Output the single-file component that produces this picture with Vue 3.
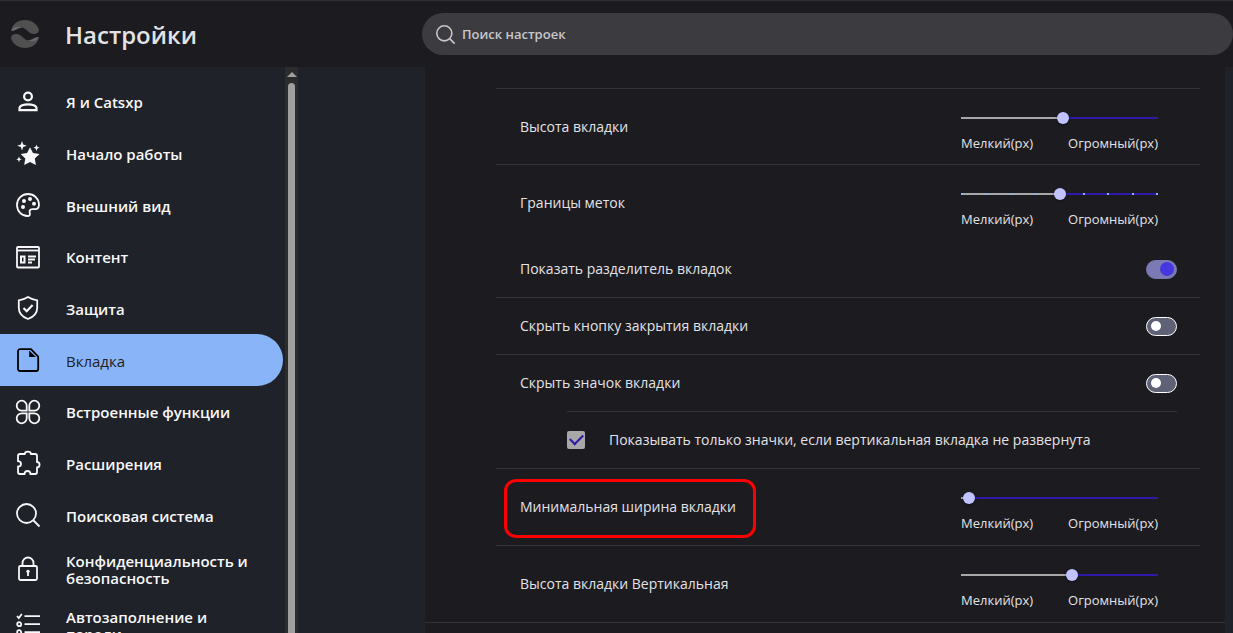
<script setup>
import { ref } from 'vue'

const query = ref('')

const items = ref([
  { icon: 'person', label: 'Я и Catsxp' },
  { icon: 'stars', label: 'Начало работы' },
  { icon: 'palette', label: 'Внешний вид' },
  { icon: 'content', label: 'Контент' },
  { icon: 'shield', label: 'Защита' },
  { icon: 'tab', label: 'Вкладка', active: true },
  { icon: 'clover', label: 'Встроенные функции' },
  { icon: 'puzzle', label: 'Расширения' },
  { icon: 'search', label: 'Поисковая система' }
])

const tallItems = ref([
  { icon: 'lock', label: 'Конфиденциальность и безопасность' },
  { icon: 'list', label: 'Автозаполнение и пароли' }
])

const rows = ref([
  { id: 'height', type: 'slider', label: 'Высота вкладки', value: 52 },
  { id: 'radius', type: 'slider', label: 'Границы меток', value: 50, ticks: true, plain: true },
  { id: 'divider', type: 'toggle', label: 'Показать разделитель вкладок', value: true },
  { id: 'close', type: 'toggle', label: 'Скрыть кнопку закрытия вкладки', value: false },
  { id: 'icon', type: 'toggle', label: 'Скрыть значок вкладки', value: false, plain: true },
  { id: 'only', type: 'check', label: 'Показывать только значки, если вертикальная вкладка не развернута', value: true },
  { id: 'min', type: 'slider', label: 'Минимальная ширина вкладки', value: 1, marked: true },
  { id: 'vheight', type: 'slider', label: 'Высота вкладки Вертикальная', value: 57, plain: true }
])

const icons = {
  person: '<g stroke-width="2.2"><circle cx="12" cy="6.500" r="3.900"/><path d="M3.500 20.200v-2c0-2.400 4.300-3.900 8.500-3.900s8.500 1.500 8.500 3.900v2z"/></g>',
  stars: '<g fill="currentColor" stroke="none"><path d="M14 6.200l3 5.800 6.500 1-4.700 4.500 1.100 6.400-5.900-3-5.800 3 1.100-6.400L4.700 13l6.400-1z"/><path d="M6 0l1.200 3.400 3.600 1.300-3.600 1.300L6 9.500 4.800 6 1.200 4.700l3.600-1.300zM20.500 3.700l.9 2.100 2.200.9-2.200.9-.9 2.300-.9-2.300-2.200-.9 2.200-.9zM3 15.500l.8 2.100 1.900.8-1.900.7L3 21.300l-.8-2.200-1.900-.7 1.900-.8z"/></g>',
  palette: '<path d="M12 1C5.900 1 1 5.900 1 12s4.700 11 10.500 11c2.200 0 2.700-1.300 2.300-2.700-.7-2.400.1-4.200 2.600-4.200h2.800c2.500 0 3.800-1.700 3.800-4.600C23 5.600 18 1 12 1z"/><g fill="currentColor" stroke="none"><circle cx="8" cy="8" r="2"/><circle cx="14" cy="6" r="2"/><circle cx="18" cy="10.700" r="2"/><circle cx="7" cy="14" r="2"/></g>',
  content: '<rect x="1" y="2" width="22" height="20.500" rx="1"/><path d="M1 5.500h22"/><path d="M5 11.500h3.500v6H5zM12 11.500h8M12 14.500h7M12 17.500h4" stroke-width="2"/>',
  shield: '<path d="M12 1.100c3 2 6 2.900 9.200 3.200v7.600c0 5.500-4 9-9.200 11.100-5.200-2.100-9.200-5.600-9.200-11.100V4.300C6 4 9 3.100 12 1.100z"/><path d="M7.500 12l3.200 3.200 5.900-6.300" stroke-width="2.200"/>',
  tab: '<path d="M4 1.200h11l7.200 7.300V21a2 2 0 0 1-2 2H4a2 2 0 0 1-2-2V3.200a2 2 0 0 1 2-2z"/><path d="M13.200 2.500V9h6.600z" fill="currentColor" stroke="none"/>',
  clover: '<path d="M10.700 10.700H5.900A5 5 0 1 1 10.700 5.900zM13.300 10.700V5.900a5 5 0 1 1 4.800 4.800zM10.700 13.300v4.800a5 5 0 1 1-4.800-4.800zM13.300 13.300h4.800a5 5 0 1 1-4.800 4.800z"/>',
  puzzle: '<path d="M4 3h4.700c.3-3.200 6-3.200 6.300 0H19c1.200 0 2 .8 2 2v6c3.400.1 3.400 5.400 0 5.500V21c0 1.200-.8 2-2 2h-4.500c-.2-4-5.800-4-6 0H4c-1.200 0-2-.8-2-2v-5.300c4-.2 4-5.300 0-5.500V5c0-1.200.8-2 2-2z"/>',
  search: '<circle cx="10.500" cy="10.500" r="9.500"/><path d="M17.500 17.500l6 6"/>',
  lock: '<rect x="3" y="9" width="18" height="14" rx="1.500"/><path d="M6.500 9V6a5.500 5.500 0 0 1 11 0v3M12 15v4"/><circle cx="12" cy="14.500" r="1.300" fill="currentColor" stroke-width="1"/>',
  list: '<path d="M8.500 3.200H24M8.500 11.200H24M8.500 19.200H24M1 3l1.800 2 3-4"/><circle cx="3.200" cy="11.200" r="2"/><circle cx="3.200" cy="19.200" r="2"/>'
}

// The fill ends under the centre of the 12px thumb.
const fill = (value) => ({ '--fill': `calc(6px + (100% - 12px) * ${value / 100})` })
</script>

<template>
  <div class="page">
    <header class="top">
      <div class="brand">
        <svg class="logo" viewBox="0 0 28 28" aria-hidden="true">
          <g v-for="turn in [0, 180]" :key="turn" :transform="`rotate(${turn} 14 14)`">
            <path d="M.2 10.500C1.500 4 7 0 14 0s13 4.500 14 10.500c-.5 3.800-6 4.500-9.500 2C15.500 10.300 13.500 7.600 10 7.600 6 7.600 4.500 11.500.2 10.500z" fill="#505050" />
            <path d="M.2 10.500C1.300 7.500 6.500 5.500 11 7.700 6 7.600 4.500 11.500.2 10.500z" fill="#6a6a6a" />
          </g>
        </svg>
        <h1>Настройки</h1>
      </div>
      <label class="search">
        <svg class="glyph" viewBox="0 0 24 24" aria-hidden="true" v-html="icons.search" />
        <input v-model="query" type="search" placeholder="Поиск настроек" aria-label="Поиск настроек" />
      </label>
    </header>

    <div class="body">
      <nav class="side">
        <div class="group">
          <a v-for="item in items" :key="item.icon" href="#" class="item" :class="{ active: item.active }">
            <svg class="icon" viewBox="0 0 24 24" aria-hidden="true" v-html="icons[item.icon]" />
            <span>{{ item.label }}</span>
          </a>
        </div>
        <a v-for="item in tallItems" :key="item.icon" href="#" class="item tall">
          <svg class="icon" viewBox="0 0 24 24" aria-hidden="true" v-html="icons[item.icon]" />
          <span>{{ item.label }}</span>
        </a>
      </nav>
      <div class="scroll" aria-hidden="true">
        <i class="arrow"></i>
        <i class="thumb"></i>
      </div>

      <main class="panel">
        <div class="rows">
          <div v-for="row in rows" :key="row.id" class="row" :class="[row.type, { plain: row.plain }]">
            <input v-if="row.type === 'check'" :id="row.id" v-model="row.value" class="box" type="checkbox" />
            <label :for="row.id" class="label">
              {{ row.label }}
              <span v-if="row.marked" class="mark"></span>
            </label>
            <div v-if="row.type === 'slider'" class="range">
              <input
                :id="row.id"
                v-model="row.value"
                :class="{ ticks: row.ticks }"
                :style="fill(row.value)"
                type="range"
                min="0"
                max="100"
              />
              <div class="ends"><span>Мелкий(px)</span><span>Огромный(px)</span></div>
            </div>
            <input v-if="row.type === 'toggle'" :id="row.id" v-model="row.value" class="switch" type="checkbox" role="switch" />
          </div>
        </div>
      </main>
    </div>
  </div>
</template>

<style>
body {
  background: #1f2229;
}
</style>

<style scoped>
.page {
  display: flex;
  flex-direction: column;
  height: 100vh;
  overflow: hidden;
  box-sizing: border-box;
  color: #e3e2e6;
  background: #1f2229;
  font-family: "Open Sans", "Noto Sans", sans-serif;
  font-size: 14px;
}
.page * {
  box-sizing: border-box;
}
.top {
  display: flex;
  align-items: center;
  flex: none;
  height: 67px;
  border-top: 1px solid #303034;
  background: #1c1b1f;
}
.brand {
  display: flex;
  align-items: center;
  gap: 26px;
  width: 422px;
  padding-left: 11px;
}
.logo {
  width: 28px;
  height: 28px;
}
h1 {
  margin: 0;
  padding-top: 2px;
  font-size: 24px;
  font-weight: 600;
  line-height: 32px;
}
.search {
  display: flex;
  align-items: center;
  flex: 1;
  gap: 7px;
  height: 42px;
  padding: 0 14px;
  border-radius: 21px;
  background: #3c3b3f;
  color: #c8c7cb;
}
.glyph {
  width: 19px;
  height: 19px;
  overflow: visible;
  fill: none;
  stroke: currentColor;
  stroke-width: 2;
}
.search input {
  flex: 1;
  min-width: 0;
  padding: 0;
  border: 0;
  outline: 0;
  background: none;
  color: inherit;
  font: 600 13px/20px "Open Sans", "Noto Sans", sans-serif;
}
.search input::placeholder {
  color: inherit;
  opacity: 1;
}
.body {
  display: flex;
  flex: 1;
  min-height: 0;
}
.side {
  width: 285px;
  padding-top: 9px;
  overflow: hidden;
}
.group {
  display: grid;
  grid-auto-rows: 1fr;
  height: 465px;
}
.item {
  display: flex;
  align-items: center;
  gap: 26px;
  margin-right: 2px;
  padding: 0 20px 0 16px;
  border-radius: 0 26px 26px 0;
  color: #f8f8fa;
  font-size: 15px;
  font-weight: 600;
  line-height: 17px;
  text-decoration: none;
}
.item span {
  padding-top: 2px;
}
.item.tall {
  height: 56px;
}
.item.active {
  background: #8ab4f8;
  color: #202124;
  font-weight: 500;
}
.icon {
  flex: none;
  width: 24px;
  height: 24px;
  overflow: visible;
  fill: none;
  stroke: currentColor;
  stroke-width: 1.8;
}
.item.active .icon {
  color: #000;
}
.scroll {
  display: flex;
  flex-direction: column;
  align-items: center;
  gap: 6px;
  width: 13px;
  padding-top: 5px;
  background: #2c2c2c;
}
.arrow {
  border: 5px solid transparent;
  border-top: 0;
  border-bottom-color: #9f9f9f;
}
.thumb {
  flex: 1;
  width: 7px;
  border-radius: 4px 4px 0 0;
  background: #9f9f9f;
}
.panel {
  flex: 1;
  margin: 0 8px 0 127px;
  background: #1c1b1f;
}
.rows {
  padding: 21px 25px 0 71px;
  border-bottom: 1px solid #333237;
}
.row {
  display: flex;
  align-items: center;
  min-height: 57px;
  padding: 0 23px 0 24px;
  border-bottom: 1px solid #333237;
}
.row:first-child {
  border-top: 1px solid #333237;
}
.row.slider {
  min-height: 77px;
  padding-right: 42px;
}
.row.slider.plain {
  min-height: 76px;
}
.row.plain {
  border-bottom-color: transparent;
}
.row.plain:last-child {
  border-bottom: 0;
}
.row.check {
  position: relative;
  padding-left: 71px;
}
.row.check::before {
  content: "";
  position: absolute;
  top: -1px;
  left: 71px;
  right: 23px;
  border-top: 1px solid #333237;
}
.label {
  position: relative;
  margin-right: auto;
  line-height: 20px;
}
.mark {
  position: absolute;
  top: -18px;
  left: -16px;
  width: 252px;
  height: 59px;
  border: 3px solid #f00;
  border-radius: 12px;
}
.range {
  width: 197px;
  padding-top: 10px;
}
.range input {
  display: block;
  width: 100%;
  height: 12px;
  margin: 0 0 10px;
  appearance: none;
  background: linear-gradient(to right, #a8a8a8 var(--fill), #2f19a8 var(--fill)) center / 100% 2px no-repeat;
}
.range input.ticks {
  background:
    repeating-linear-gradient(to right, #8ab4f8 0 2px, transparent 2px calc((100% - 2px) / 8)) center / 100% 2px no-repeat,
    linear-gradient(to right, #a8a8a8 var(--fill), #2f19a8 var(--fill)) center / 100% 2px no-repeat;
}
.range input::-webkit-slider-thumb {
  appearance: none;
  width: 12px;
  height: 12px;
  border-radius: 50%;
  background: #c0c3ff;
  box-shadow: 0 1px 3px rgba(0, 0, 0, 0.4);
}
.ends {
  display: flex;
  justify-content: space-between;
  font-size: 13px;
  line-height: 18px;
}
.switch {
  display: flex;
  align-items: center;
  width: 31px;
  height: 19px;
  margin: 0;
  padding: 0 4px;
  appearance: none;
  border: 1px solid #fff;
  border-radius: 10px;
  background: #5f6176;
}
.switch::before {
  content: "";
  width: 10px;
  height: 10px;
  border-radius: 50%;
  background: #fff;
}
.switch:checked {
  justify-content: flex-end;
  padding: 0 2px;
  border-color: #7b7ab4;
  background: #7b7ab4;
}
.switch:checked::before {
  width: 14px;
  height: 14px;
  background: #4637e0;
}
.box {
  display: grid;
  place-items: center;
  width: 18px;
  height: 18px;
  margin: 0 24px 0 0;
  appearance: none;
  border-radius: 2px;
  background: #a8a8a8;
}
.box:checked::before {
  content: "";
  width: 11px;
  height: 6px;
  border: 2px solid #2f19a8;
  border-top: 0;
  border-right: 0;
  transform: translateY(-2px) rotate(-45deg);
}
</style>
